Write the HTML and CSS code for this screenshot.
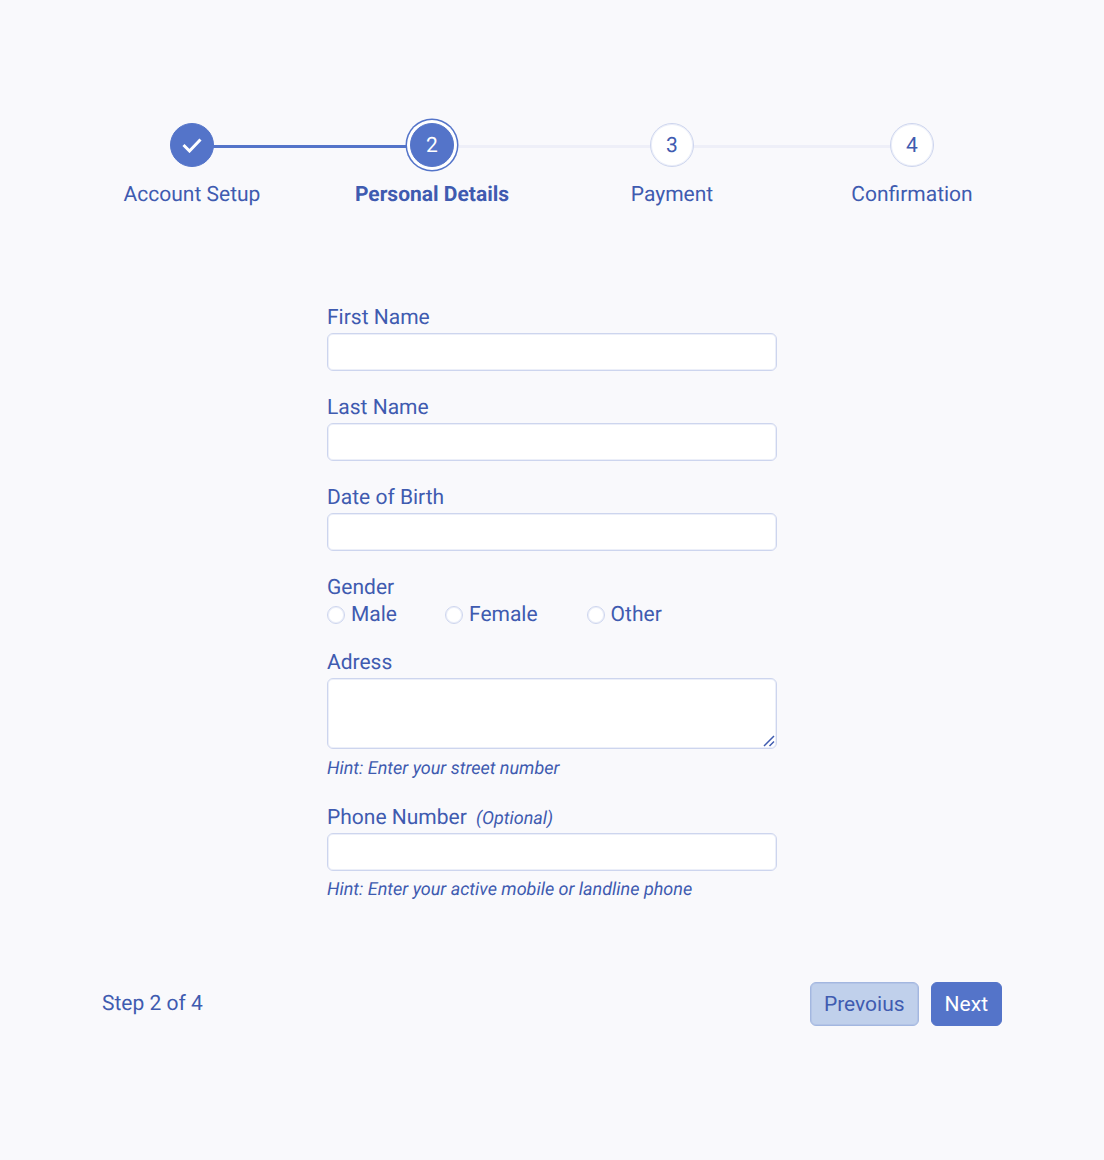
FILE: index.html
```html
<!DOCTYPE html>
<html lang="en">
<head>
  <meta charset="UTF-8" />
  <meta name="viewport" content="width=device-width, initial-scale=1.0"/>
  <title>Personal Details</title>
  <link rel="stylesheet" href="styles.css">
</head>
<body>

<ol class="stepper">
  <li class="step step-done">
    <span class="step-circle">
      <svg width="20" height="15" viewBox="0 0 20 15" fill="none" stroke="#fff" stroke-width="3"><path d="M1.5 7 L7.5 13 L18.5 1.5"/></svg>
    </span>
    <span class="step-label">Account Setup</span>
  </li>
  <li class="step step-current">
    <span class="step-circle">2</span>
    <span class="step-label">Personal Details</span>
  </li>
  <li class="step">
    <span class="step-circle">3</span>
    <span class="step-label">Payment</span>
  </li>
  <li class="step">
    <span class="step-circle">4</span>
    <span class="step-label">Confirmation</span>
  </li>
</ol>

<form class="form">
  <div class="field">
    <label for="firstName">First Name</label>
    <input id="firstName" type="text">
  </div>
  <div class="field">
    <label for="lastName">Last Name</label>
    <input id="lastName" type="text">
  </div>
  <div class="field">
    <label for="dob">Date of Birth</label>
    <input id="dob" type="text">
  </div>
  <div class="field field-gender">
    <span class="field-title">Gender</span>
    <div class="radios">
      <label class="radio radio-male"><input type="radio" name="gender">Male</label>
      <label class="radio radio-female"><input type="radio" name="gender">Female</label>
      <label class="radio"><input type="radio" name="gender">Other</label>
    </div>
  </div>
  <div class="field field-address">
    <label for="address">Adress</label>
    <div class="textarea-wrap">
      <textarea id="address"></textarea>
      <!-- resize handle -->
      <svg class="grip" width="12" height="12" viewBox="0 0 12 12" fill="none" stroke="#3f5bb0" stroke-width="1.5"><path d="M1 11 L11 1 M6.5 11 L11 6.5"/></svg>
    </div>
    <p class="hint">Hint: Enter your street number</p>
  </div>
  <div class="field field-phone">
    <label for="phone">Phone Number <em class="optional">(Optional)</em></label>
    <input id="phone" type="text">
    <p class="hint">Hint: Enter your active mobile or landline phone</p>
  </div>
</form>

<div class="footer">
  <span class="step-count">Step 2 of 4</span>
  <div class="actions">
    <button class="btn btn-prev" type="button">Prevoius</button>
    <button class="btn btn-next" type="button">Next</button>
  </div>
</div>

</body>
</html>
```

FILE: styles.css
```css
* {
  box-sizing: border-box;
}
body {
  margin: 0;
  min-height: 1160px;
  padding-top: 123px;
  background-color: #f9f9fc;
  color: #3f5bb0;
  font-family: Roboto, sans-serif;
  font-size: 21px;
  line-height: 24px;
  text-rendering: geometricPrecision;
}

/* Stepper */
.stepper {
  display: grid;
  grid-template-columns: repeat(4, 240px);
  margin: 0 0 0 72px;
  padding: 0;
  list-style: none;
}
.step {
  position: relative;
  display: flex;
  flex-direction: column;
  align-items: center;
  gap: 16px;
}
.step:not(:last-child)::after {
  content: "";
  position: absolute;
  top: 22px;
  left: 50%;
  width: 100%;
  height: 3px;
  background: #eeeff8;
}
.step-done:not(:last-child)::after {
  background: #5474c9;
}
.step-label {
  line-height: 25px;
}
.step-circle {
  position: relative;
  z-index: 1;
  display: flex;
  align-items: center;
  justify-content: center;
  width: 44px;
  height: 44px;
  padding-top: 2px;
  border: 1px solid #cdd5ee;
  border-radius: 50%;
  background: #fff;
  box-shadow: inset 0 0 0 1px #eceff9;
}
.step-done .step-circle,
.step-current .step-circle {
  border-color: #5474c9;
  background: #5474c9;
  color: #fff;
  box-shadow: none;
}
.step-done .step-circle {
  padding-top: 0;
}
.step-current .step-circle {
  box-shadow: 0 0 0 3px #fff, 0 0 0 4.5px #5474c9;
}
.step-current .step-label {
  font-weight: 700;
}

/* Form */
.form {
  width: 450px;
  margin: 97px auto 0 327px;
}
.field {
  margin-bottom: 24px;
}
.field label,
.field-title {
  display: block;
  margin-bottom: 2px;
  line-height: 26px;
}
.field input[type="text"],
.field textarea {
  display: block;
  width: 100%;
  height: 38px;
  border: 1px solid #cdd5ee;
  border-radius: 6px;
  background: #fff;
  outline: none;
  box-shadow: inset 0 0 0 1px #eceff9;
}
.field-gender {
  margin-bottom: 23px;
}
.radios {
  display: flex;
}
.field .radio {
  display: flex;
  align-items: center;
  gap: 6px;
  margin: 0 48px 0 0;
  line-height: 24px;
}
.field .radio-female {
  margin-right: 49px;
}
.radio input {
  appearance: none;
  width: 18px;
  height: 18px;
  margin: 0;
  border: 1px solid #cdd5ee;
  border-radius: 50%;
  background: #fff;
  box-shadow: inset 0 0 0 1px #eceff9;
}
.textarea-wrap {
  position: relative;
}
.field textarea {
  height: 71px;
  resize: none;
}
.grip {
  position: absolute;
  right: 2px;
  bottom: 2px;
}
.hint {
  margin: 9px 0 0;
  font-size: 18px;
  font-style: italic;
  line-height: 22px;
}
.field-address {
  margin-bottom: 24px;
}
.field-phone label {
  margin-bottom: 0;
  line-height: 28px;
}
.field-phone .hint {
  margin-top: 8px;
}
.optional {
  margin-left: 4px;
  font-size: 18px;
}

/* Footer */
.footer {
  display: flex;
  justify-content: space-between;
  align-items: center;
  margin: 81px 102px 0;
  line-height: 28px;
}
.actions {
  display: flex;
  gap: 12px;
}
.btn {
  height: 44px;
  padding: 0 13px;
  border: 1px solid #5474c9;
  border-radius: 6px;
  background: #5474c9;
  color: #fff;
  font: inherit;
}
.btn-prev {
  border-color: #a3b7e0;
  background: #c0d0eb;
  color: #3f5bb0;
  box-shadow: inset 0 0 0 1px #b3c4e6;
}
```
